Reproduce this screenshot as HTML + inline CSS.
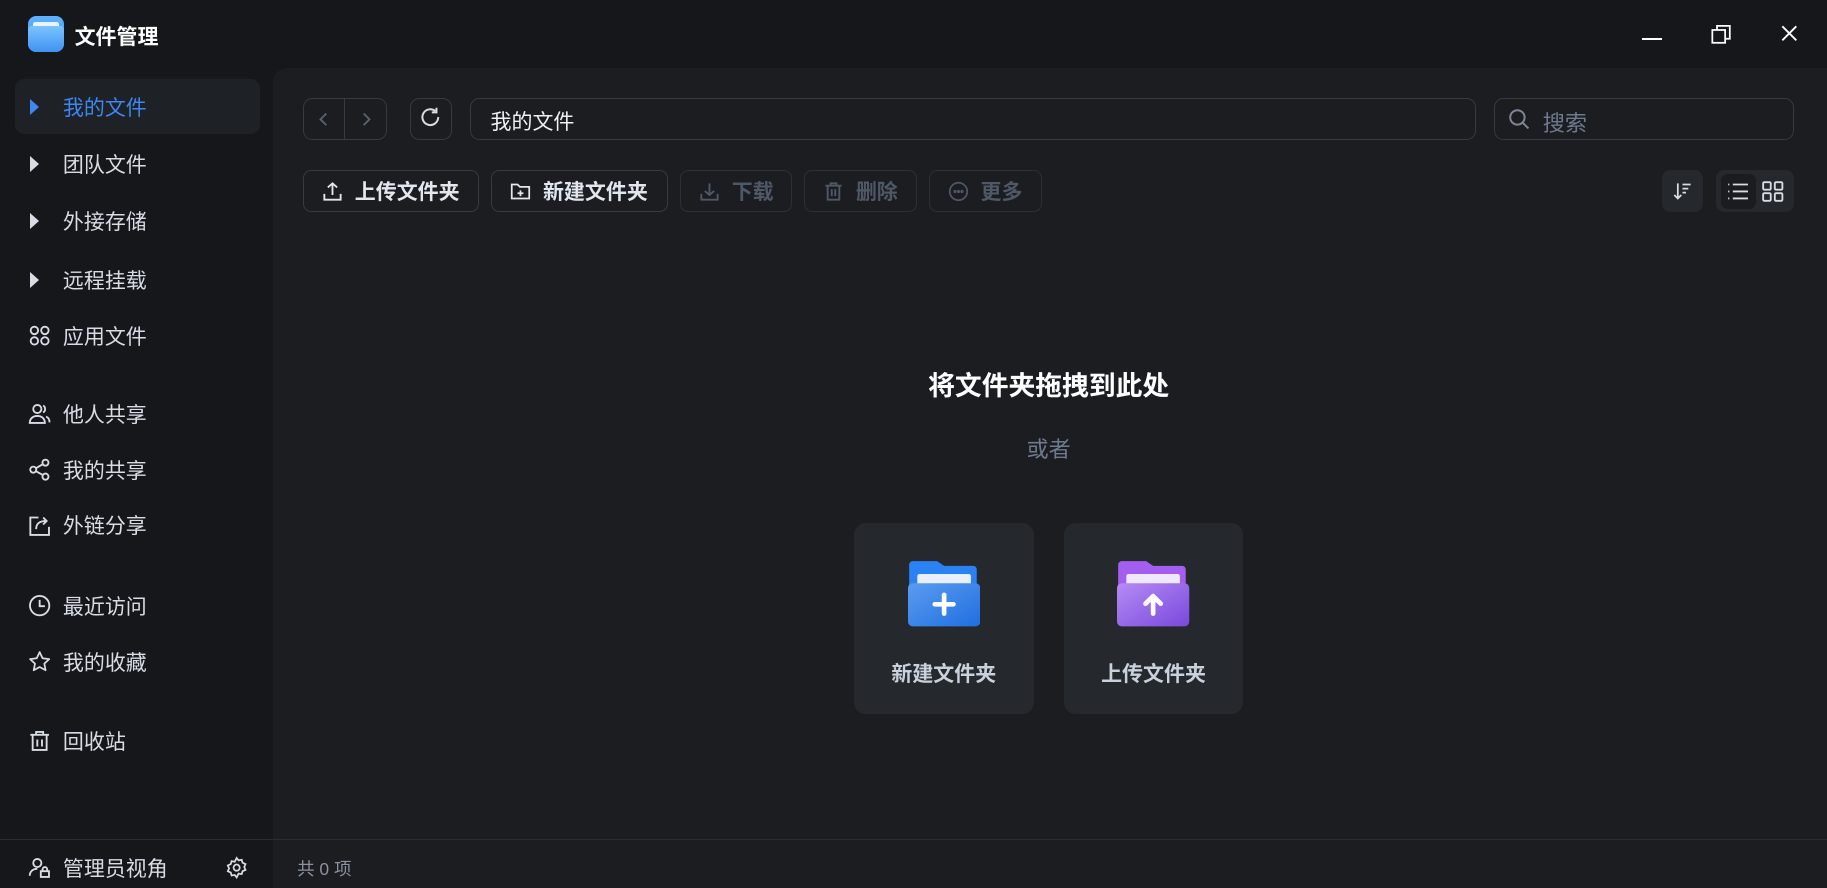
<!DOCTYPE html>
<html><head><meta charset="utf-8"><style>
*{box-sizing:border-box;margin:0;padding:0}
html,body{width:1827px;height:888px;overflow:hidden;background:#15171a}
#w{width:1568px;height:762px;zoom:1.16518;position:relative;background:#15171a;font-family:"Liberation Sans","Noto Sans CJK SC",sans-serif;color:#d8dde5}
.a{position:absolute}
.title{left:64px;top:18px;font-size:18px;font-weight:bold;color:#fff}
.main{left:234px;top:58px;width:1334px;height:704px;background:#1b1d21;border-top-left-radius:12px}
.si{position:absolute;left:13px;width:210px;height:46px;display:flex;align-items:center;font-size:18px;color:#d8dde5}
.si .ic{width:41px;display:flex;justify-content:center;padding-left:1px}
.si.act{background:#1e2126;border-radius:8px;color:#3d87f0}
.tri{width:0;height:0;border-left:8px solid #d8dde5;border-top:7px solid transparent;border-bottom:7px solid transparent;margin-right:8px}
.box{position:absolute;border:1px solid #363a41;border-radius:8px}
.btn{position:absolute;top:146px;height:36px;border:1px solid #363a41;border-radius:7px;display:flex;align-items:center;justify-content:center;gap:10px;font-size:18px;font-weight:bold;color:#e2e7ee}
.btn.d{color:#4f5866;border-color:#2c3036}
.card{position:absolute;top:449px;width:154px;height:164px;background:#25282d;border-radius:10px}
svg{display:block}
</style></head><body><div id="w">
<div class="a" style="left:24px;top:14px;width:31px;height:31px;border-radius:7px;background:linear-gradient(180deg,#5fb4ff,#3a8ef0);overflow:hidden">
<div style="position:absolute;left:4px;top:5px;width:23px;height:5px;background:#e8f3ff;border-radius:2px"></div>
<div style="position:absolute;left:0;top:8px;width:31px;height:23px;background:linear-gradient(180deg,#7cc4ff,#3e92f2);border-radius:3px"></div>
</div>
<div class="a title">文件管理</div>
<div class="a" style="left:1409px;top:33px;width:17px;height:1.5px;background:#fff"></div>
<svg class="a" style="left:1468px;top:20px" width="20" height="20" viewBox="0 0 20 20" fill="none" stroke="#fff" stroke-width="1.5"><rect x="2" y="6" width="11" height="11"/><path d="M6 6V2.5h11v11h-4"/></svg>
<svg class="a" style="left:1528px;top:21px" width="16" height="16" viewBox="0 0 16 16" stroke="#fff" stroke-width="1.6"><path d="M2 2l12 12M14 2L2 14"/></svg>

<div class="si act" style="top:68px;height:47px"><div class="ic"><div class="tri" style="border-left-color:#3d87f0"></div></div>我的文件</div>
<div class="si" style="top:118px"><div class="ic"><div class="tri"></div></div>团队文件</div>
<div class="si" style="top:167px"><div class="ic"><div class="tri"></div></div>外接存储</div>
<div class="si" style="top:217px"><div class="ic"><div class="tri"></div></div>远程挂载</div>
<div class="si" style="top:265px"><div class="ic"><svg width="20" height="20" viewBox="0 0 20 20" fill="none" stroke="#d8dde5" stroke-width="1.6"><circle cx="5.5" cy="5.5" r="3.2"/><circle cx="14.5" cy="5.5" r="3.2"/><circle cx="5.5" cy="14.5" r="3.2"/><circle cx="14.5" cy="14.5" r="3.2"/></svg></div>应用文件</div>
<div class="si" style="top:332px"><div class="ic"><svg width="20" height="20" viewBox="0 0 20 20" fill="none" stroke="#d8dde5" stroke-width="1.6"><circle cx="8" cy="6" r="3.5"/><path d="M1.5 18c0-4 3-6 6.5-6s6.5 2 6.5 6zM13 3a3.5 3.5 0 0 1 0 6M15.5 12.5c1.8.8 3 2.5 3 5"/></svg></div>他人共享</div>
<div class="si" style="top:380px"><div class="ic"><svg width="20" height="20" viewBox="0 0 20 20" fill="none" stroke="#d8dde5" stroke-width="1.6"><circle cx="4.5" cy="10" r="2.6"/><circle cx="15" cy="4" r="2.6"/><circle cx="15" cy="16" r="2.6"/><path d="M6.8 8.7l6-3.4M6.8 11.3l6 3.4"/></svg></div>我的共享</div>
<div class="si" style="top:428px"><div class="ic"><svg width="20" height="20" viewBox="0 0 20 20" fill="none" stroke="#d8dde5" stroke-width="1.6"><path d="M9 3H2v15h16v-7M7 13c0-5 3-7 9-7M13 3l3 3-3 3"/></svg></div>外链分享</div>
<div class="si" style="top:497px"><div class="ic"><svg width="20" height="20" viewBox="0 0 20 20" fill="none" stroke="#d8dde5" stroke-width="1.6"><circle cx="10" cy="10" r="8.3"/><path d="M10 5v5.5h4.5"/></svg></div>最近访问</div>
<div class="si" style="top:545px"><div class="ic"><svg width="20" height="20" viewBox="0 0 20 20" fill="none" stroke="#d8dde5" stroke-width="1.5" stroke-linejoin="round"><path d="M10 1.8l2.5 5.3 5.7.7-4.2 3.9 1.1 5.7L10 14.6l-5.1 2.8 1.1-5.7-4.2-3.9 5.7-.7z"/></svg></div>我的收藏</div>
<div class="si" style="top:613px"><div class="ic"><svg width="20" height="20" viewBox="0 0 20 20" fill="none" stroke="#d8dde5" stroke-width="1.6"><path d="M2 5h16M7 5V2.5h6V5M4 5v13h12V5M8 9v6M12 9v6"/></svg></div>回收站</div>
<div class="a" style="left:0;top:720px;width:1568px;height:1px;background:#2a2d33"></div>
<div class="si" style="top:722px;height:46px"><div class="ic"><svg width="20" height="20" viewBox="0 0 20 20" fill="none" stroke="#d8dde5" stroke-width="1.6"><circle cx="8" cy="6" r="3.5"/><path d="M1.5 17c0-4 3-6 6.5-6M11 13h7v5h-7zM12.5 13v-1.5a2 2 0 0 1 4 0V13"/></svg></div>管理员视角</div>
<svg class="a" style="left:193px;top:735px" width="20" height="20" viewBox="0 0 24 24" fill="none" stroke="#d8dde5" stroke-width="1.8"><circle cx="12" cy="12" r="3.2"/><path d="M12 2l2 2.5 3.2-.6.9 3.1 3 1.3-1.3 3 1.3 3-3 1.3-.9 3.1-3.2-.6L12 22l-2-2.5-3.2.6-.9-3.1-3-1.3 1.3-3-1.3-3 3-1.3.9-3.1 3.2.6z"/></svg>

<div class="a main"></div>
<div class="a" style="left:234px;top:720px;width:1334px;height:1px;background:#2a2d33"></div>
<div class="a" style="left:255px;top:735px;font-size:15px;color:#8a929e">共 0 项</div>

<div class="box" style="left:260px;top:84px;width:72px;height:36px"></div>
<div class="a" style="left:295px;top:85px;width:1px;height:34px;background:#363a41"></div>
<svg class="a" style="left:272px;top:94px" width="12" height="16" viewBox="0 0 12 16" fill="none" stroke="#5a6270" stroke-width="1.6"><path d="M8 3L3 8l5 5"/></svg>
<svg class="a" style="left:308px;top:94px" width="12" height="16" viewBox="0 0 12 16" fill="none" stroke="#5a6270" stroke-width="1.6"><path d="M4 3l5 5-5 5"/></svg>
<div class="box" style="left:352px;top:84px;width:36px;height:36px"></div>
<svg class="a" style="left:360px;top:91px" width="20" height="20" viewBox="0 0 20 20" fill="none" stroke="#d8dde5" stroke-width="1.7"><path d="M16.5 9.5A6.8 6.8 0 1 1 14 4.3M15 1.5v4h-4"/></svg>
<div class="box" style="left:403px;top:84px;width:864px;height:36px"></div>
<div class="a" style="left:421px;top:91px;font-size:18px;color:#eef1f5">我的文件</div>
<div class="box" style="left:1282px;top:84px;width:258px;height:36px"></div>
<svg class="a" style="left:1294px;top:93px" width="19" height="19" viewBox="0 0 20 20" fill="none" stroke="#7d8696" stroke-width="1.8"><circle cx="8.5" cy="8.5" r="6.5"/><path d="M13.5 13.5l5 5"/></svg>
<div class="a" style="left:1324px;top:91px;font-size:19px;color:#6e7a8e">搜索</div>

<div class="btn" style="left:260px;width:151px"><svg width="18" height="18" viewBox="0 0 18 18" fill="none" stroke="#e2e7ee" stroke-width="1.6"><path d="M9 12V2M5 5.5L9 2l4 3.5M2 11v5h14v-5"/></svg>上传文件夹</div>
<div class="btn" style="left:421px;width:152px"><svg width="18" height="18" viewBox="0 0 18 18" fill="none" stroke="#e2e7ee" stroke-width="1.5"><path d="M1.5 3h5l2 2h8v10h-15zM9 8v5M6.5 10.5h5"/></svg>新建文件夹</div>
<div class="btn d" style="left:584px;width:96px"><svg width="18" height="18" viewBox="0 0 18 18" fill="none" stroke="#4f5866" stroke-width="1.6"><path d="M9 2v10M5 8.5L9 12l4-3.5M2 11v5h14v-5"/></svg>下载</div>
<div class="btn d" style="left:690px;width:97px"><svg width="18" height="18" viewBox="0 0 18 18" fill="none" stroke="#4f5866" stroke-width="1.6"><path d="M2 4h14M6.5 4V2h5v2M4 4v12h10V4M7.5 7v6M10.5 7v6"/></svg>删除</div>
<div class="btn d" style="left:797px;width:97px"><svg width="18" height="18" viewBox="0 0 18 18" fill="none" stroke="#4f5866" stroke-width="1.5"><circle cx="9" cy="9" r="7.5"/><circle cx="6" cy="9" r=".6"/><circle cx="9" cy="9" r=".6"/><circle cx="12" cy="9" r=".6"/></svg>更多</div>

<div class="a" style="left:1426px;top:146px;width:36px;height:36px;background:#25282d;border-radius:7px"></div>
<svg class="a" style="left:1435px;top:155px" width="18" height="18" viewBox="0 0 18 18" fill="none" stroke="#d8dde5" stroke-width="1.5"><path d="M5 2v13M2 12l3 3 3-3M9 3h7M9 6.5h5M9 10h3"/></svg>
<div class="a" style="left:1473px;top:146px;width:67px;height:36px;background:#25282d;border-radius:7px"></div>
<div class="a" style="left:1477px;top:149px;width:30px;height:30px;background:#1a1c20;border-radius:6px"></div>
<svg class="a" style="left:1482px;top:155px" width="19" height="18" viewBox="0 0 19 18" fill="none" stroke="#d8dde5" stroke-width="1.6"><path d="M1 3h1M1 9h1M1 15h1M5 3h13M5 9h13M5 15h13"/></svg>
<svg class="a" style="left:1512px;top:155px" width="19" height="18" viewBox="0 0 19 18" fill="none" stroke="#d8dde5" stroke-width="1.6"><rect x="1" y="1" width="6.5" height="6.5" rx="1"/><rect x="11" y="1" width="6.5" height="6.5" rx="1"/><rect x="1" y="10.5" width="6.5" height="6.5" rx="1"/><rect x="11" y="10.5" width="6.5" height="6.5" rx="1"/></svg>

<div class="a" style="left:700px;width:400px;top:312px;text-align:center;font-size:23px;font-weight:bold;color:#fff">将文件夹拖拽到此处</div>
<div class="a" style="left:700px;width:400px;top:371px;text-align:center;font-size:19px;color:#6e7a8e">或者</div>

<div class="card" style="left:733px"></div>
<div class="card" style="left:913px"></div>
<svg class="a" style="left:779px;top:481px" width="62" height="58" viewBox="0 0 62 58">
<defs><linearGradient id="b" x1="0" y1="0" x2="1" y2="1"><stop offset="0" stop-color="#5b9cf0"/><stop offset="1" stop-color="#1f6fe0"/></linearGradient>
<linearGradient id="p" x1="0" y1="0" x2="1" y2="1"><stop offset="0" stop-color="#b48cf5"/><stop offset="1" stop-color="#7a48dc"/></linearGradient></defs>
<path d="M1 4a3 3 0 0 1 3-3h21l6 4h25a3 3 0 0 1 3 3v30H1z" fill="#2b82f5"/>
<rect x="8" y="12" width="46" height="14" rx="2" fill="#e8efff"/>
<rect x="0" y="20" width="62" height="37" rx="4" fill="url(#b)"/>
<path d="M31 30v16M23 38h16" stroke="#fff" stroke-width="4" stroke-linecap="round"/>
</svg>
<svg class="a" style="left:959px;top:481px" width="62" height="58" viewBox="0 0 62 58">
<path d="M1 4a3 3 0 0 1 3-3h21l6 4h25a3 3 0 0 1 3 3v30H1z" fill="#a45ff0"/>
<rect x="8" y="12" width="46" height="14" rx="2" fill="#f0e8ff"/>
<rect x="0" y="20" width="62" height="37" rx="4" fill="url(#p)"/>
<path d="M31 46V31M24.5 37.5L31 31l6.5 6.5" stroke="#fff" stroke-width="4" stroke-linecap="round" stroke-linejoin="round" fill="none"/>
</svg>
<div class="a" style="left:733px;width:154px;top:565px;text-align:center;font-size:18px;font-weight:bold;color:#c9d1dc">新建文件夹</div>
<div class="a" style="left:913px;width:154px;top:565px;text-align:center;font-size:18px;font-weight:bold;color:#c9d1dc">上传文件夹</div>
</div></body></html>
